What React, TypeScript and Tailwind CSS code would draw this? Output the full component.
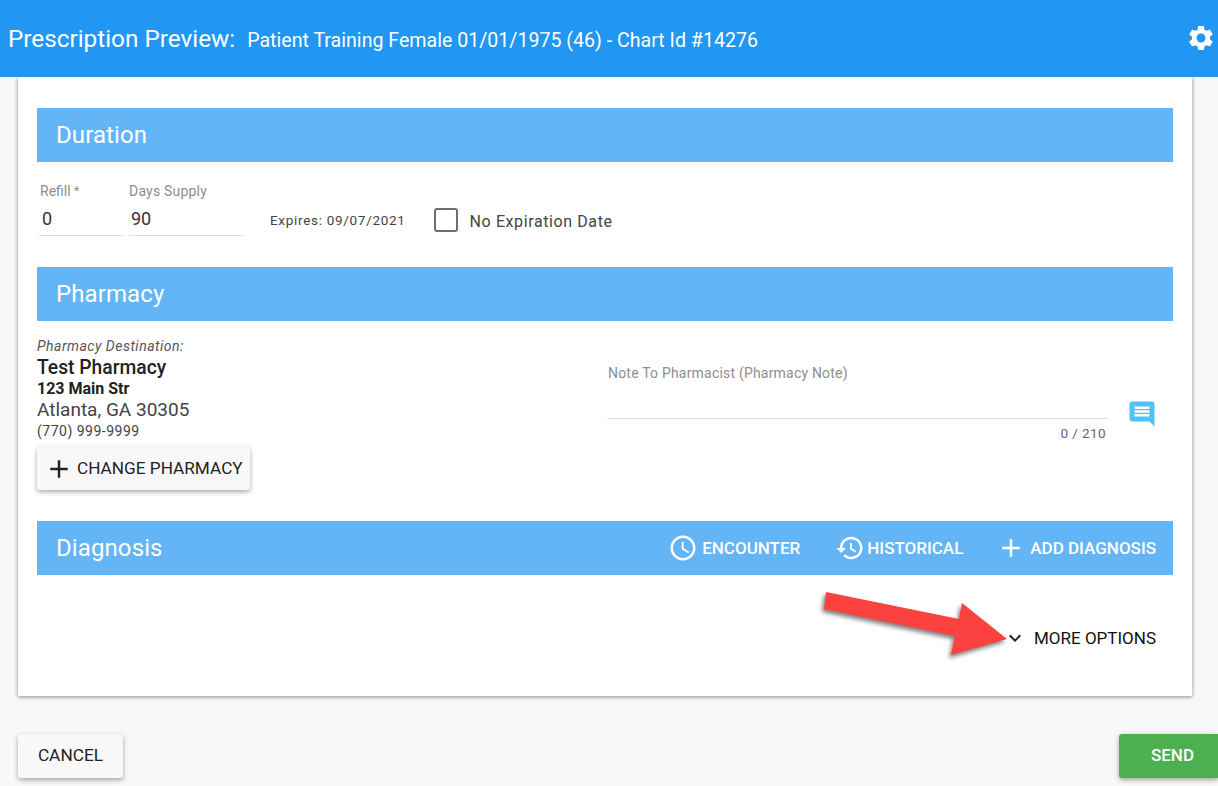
const icons = {
  settings:
    "M19.14 12.94c.04-.3.06-.61.06-.94 0-.32-.02-.64-.07-.94l2.03-1.58c.18-.14.23-.41.12-.61l-1.92-3.32c-.12-.22-.37-.29-.59-.22l-2.39.96c-.5-.38-1.03-.7-1.62-.94l-.36-2.54c-.04-.24-.24-.41-.48-.41h-3.84c-.24 0-.43.17-.47.41l-.36 2.54c-.59.24-1.13.57-1.62.94l-2.39-.96c-.22-.08-.47 0-.59.22L2.74 8.87c-.12.21-.08.47.12.61l2.03 1.58c-.05.3-.09.63-.09.94s.02.64.07.94l-2.03 1.58c-.18.14-.23.41-.12.61l1.92 3.32c.12.22.37.29.59.22l2.39-.96c.5.38 1.03.7 1.62.94l.36 2.54c.05.24.24.41.48.41h3.84c.24 0 .44-.17.47-.41l.36-2.54c.59-.24 1.13-.56 1.62-.94l2.39.96c.22.08.47 0 .59-.22l1.92-3.32c.12-.22.07-.47-.12-.61l-2.01-1.58zM12 15.6c-1.98 0-3.6-1.62-3.6-3.6s1.62-3.6 3.6-3.6 3.6 1.62 3.6 3.6-1.62 3.6-3.6 3.6z",
  schedule:
    "M11.99 2C6.47 2 2 6.48 2 12s4.47 10 9.99 10C17.52 22 22 17.52 22 12S17.52 2 11.99 2zM12 20c-4.42 0-8-3.58-8-8s3.58-8 8-8 8 3.58 8 8-3.58 8-8 8zM12.5 7H11v6l5.25 3.15.75-1.23-4.5-2.67z",
  history:
    "M13 3c-4.97 0-9 4.03-9 9H1l3.89 3.89.07.14L9 12H6c0-3.87 3.13-7 7-7s7 3.13 7 7-3.13 7-7 7c-1.93 0-3.68-.79-4.94-2.06l-1.42 1.42C8.27 19.99 10.51 21 13 21c4.97 0 9-4.03 9-9s-4.03-9-9-9zm-1 5v5l4.28 2.54.72-1.21-3.5-2.08V8H12z",
  add: "M19 13h-6v6h-2v-6H5v-2h6V5h2v6h6v2z",
  expand: "M16.59 8.59L12 13.17 7.41 8.59 6 10l6 6 6-6z",
  message:
    "M20 2H4c-1.1 0-1.99.9-1.99 2L2 22l4-4h14c1.1 0 2-.9 2-2V4c0-1.1-.9-2-2-2zm-2 12H6v-2h12v2zm0-3H6V9h12v2zm0-3H6V6h12v2z",
};

function Icon({ d, className }: { d: string; className: string }) {
  return (
    <svg viewBox="0 0 24 24" fill="currentColor" className={className}>
      <path d={d} />
    </svg>
  );
}

function SectionBar({ title, children }: { title: string; children?: React.ReactNode }) {
  return (
    <div className="h-[54px] bg-[#64b5f6] pl-[19px] pr-[17px] flex items-center justify-between text-white">
      <span className="text-[24px] font-normal leading-none tracking-[0.1px]">{title}</span>
      {children}
    </div>
  );
}

function BarAction({ icon, label, gap }: { icon: string; label: string; gap: string }) {
  return (
    <div className={`flex items-center ${gap}`}>
      <Icon d={icon} className="w-[30px] h-[30px]" />
      <span className="text-[17px] font-medium leading-none">{label}</span>
    </div>
  );
}

export default function App() {
  return (
    <div className="relative w-[1218px] h-[786px] overflow-hidden bg-[#f8f8f8] font-['Roboto',sans-serif] flex flex-col">
      <header className="h-[77px] shrink-0 bg-[#2196f3] text-white flex items-center pl-2 pr-[2px] relative z-10">
        <span className="text-[24.3px] leading-none mt-0.5">Prescription Preview:</span>
        <span className="text-[19.6px] leading-none ml-3 mt-1">
          Patient Training Female 01/01/1975 (46) - Chart Id #14276
        </span>
        <Icon d={icons.settings} className="w-[30px] h-[30px] ml-auto -mt-px" />
      </header>

      <main className="ml-[18px] w-[1174px] h-[619px] shrink-0 bg-white px-[19px] pt-[31px] shadow-[0_1px_4px_rgba(0,0,0,0.45)]">
        <SectionBar title="Duration" />
        <div className="h-[105px] flex items-start pt-[21px] pl-0.5">
          <div className="w-[84px] mr-1.5 border-b border-[#dcdcdc] h-[53px]">
            <div className="text-[14px] leading-4 text-[#8e8e8e] pl-px">
              Refill <span className="text-[12px] align-top">*</span>
            </div>
            <div className="text-[18px] leading-6 text-[#333] mt-[8px] pl-[3px]">0</div>
          </div>
          <div className="w-[114px] border-b border-[#dcdcdc] h-[53px]">
            <div className="text-[14px] leading-4 tracking-[0.2px] text-[#8e8e8e]">Days Supply</div>
            <div className="text-[18px] leading-6 text-[#333] mt-[8px] pl-0.5">90</div>
          </div>
          <span className="ml-[27px] mt-[29px] text-[13.5px] leading-4 tracking-[0.7px] text-[#444]">
            Expires: 09/07/2021
          </span>
          <span className="ml-[28px] mt-[25px] w-6 h-6 rounded-[3px] border-2 border-[#6f6f6f]" />
          <span className="ml-3 mt-[29px] text-[16px] leading-5 tracking-[0.6px] text-[#444]">
            No Expiration Date
          </span>
        </div>

        <SectionBar title="Pharmacy" />
        <div className="h-[200px] flex">
          <div className="w-[570px] pt-[17px]">
            <div className="text-[14px] leading-4 italic tracking-[0.5px] text-[#555]">Pharmacy Destination:</div>
            <div className="text-[19.3px] leading-5 font-medium text-[#222] mt-[4px]">Test Pharmacy</div>
            <div className="text-[16px] leading-[18px] font-bold text-[#222] mt-[2px]">123 Main Str</div>
            <div className="text-[19px] leading-[24px] text-[#444]">Atlanta, GA 30305</div>
            <div className="text-[14px] leading-4 tracking-[0.5px] text-[#444] mt-[1px]">(770) 999-9999</div>
            <button className="mt-[8px] h-[43px] w-[213px] rounded-[3px] bg-[#f8f8f8] flex items-center pl-[7px] text-[17.2px] text-[#222] shadow-[0_2px_5px_rgba(0,0,0,0.35)]">
              <Icon d={icons.add} className="w-[30px] h-[30px] mr-[3px]" />
              CHANGE PHARMACY
            </button>
          </div>
          <div className="w-[501px] pt-[44px]">
            <div className="text-[14px] leading-4 tracking-[0.2px] text-[#8e8e8e] pl-px">
              Note To Pharmacist (Pharmacy Note)
            </div>
            <div className="h-[38px] border-b border-[#dcdcdc]" />
            <div className="text-[13.5px] leading-4 tracking-[0.4px] text-[#666] text-right pr-[2px] mt-[6px]">
              0 / 210
            </div>
          </div>
          <Icon d={icons.message} className="w-[30px] h-[30px] text-[#4fc3f7] -scale-x-100 ml-[19px] mt-[78px]" />
        </div>

        <SectionBar title="Diagnosis">
          <div className="flex items-center">
            <BarAction icon={icons.schedule} label="ENCOUNTER" gap="gap-[4px]" />
            <div className="w-[35px]" />
            <BarAction icon={icons.history} label="HISTORICAL" gap="gap-[2px]" />
            <div className="w-[33px]" />
            <BarAction icon={icons.add} label="ADD DIAGNOSIS" gap="gap-[4px]" />
          </div>
        </SectionBar>
        <div className="flex justify-end items-center pr-[17px] pt-[51px]">
          <Icon d={icons.expand} className="w-6 h-6 text-[#222] mr-[7px]" />
          <span className="text-[17px] leading-6 text-[#111]">MORE OPTIONS</span>
        </div>
      </main>

      <footer className="flex justify-between pl-[18px] mt-[38px]">
        <button className="w-[105px] h-[44px] rounded-[3px] bg-[#f8f8f8] text-[17.3px] text-[#222] shadow-[0_2px_5px_rgba(0,0,0,0.35)]">
          CANCEL
        </button>
        <button className="w-[99px] h-[44px] pl-[8px] rounded-l-[3px] bg-[#4caf50] text-[17px] font-medium text-white shadow-[0_2px_5px_rgba(0,0,0,0.35)]">
          SEND
        </button>
      </footer>

      {/* annotation arrow drawn on top of the screenshot */}
      <svg
        viewBox="0 0 200 70"
        className="absolute left-[815px] top-[590px] w-[200px] h-[70px] drop-shadow-[-2px_3px_2px_rgba(0,0,0,0.5)]"
      >
        <polygon points="11,2 9,19 140,46 136,65 192,49 147,13 144,29" fill="#fc4141" />
      </svg>
    </div>
  );
}
